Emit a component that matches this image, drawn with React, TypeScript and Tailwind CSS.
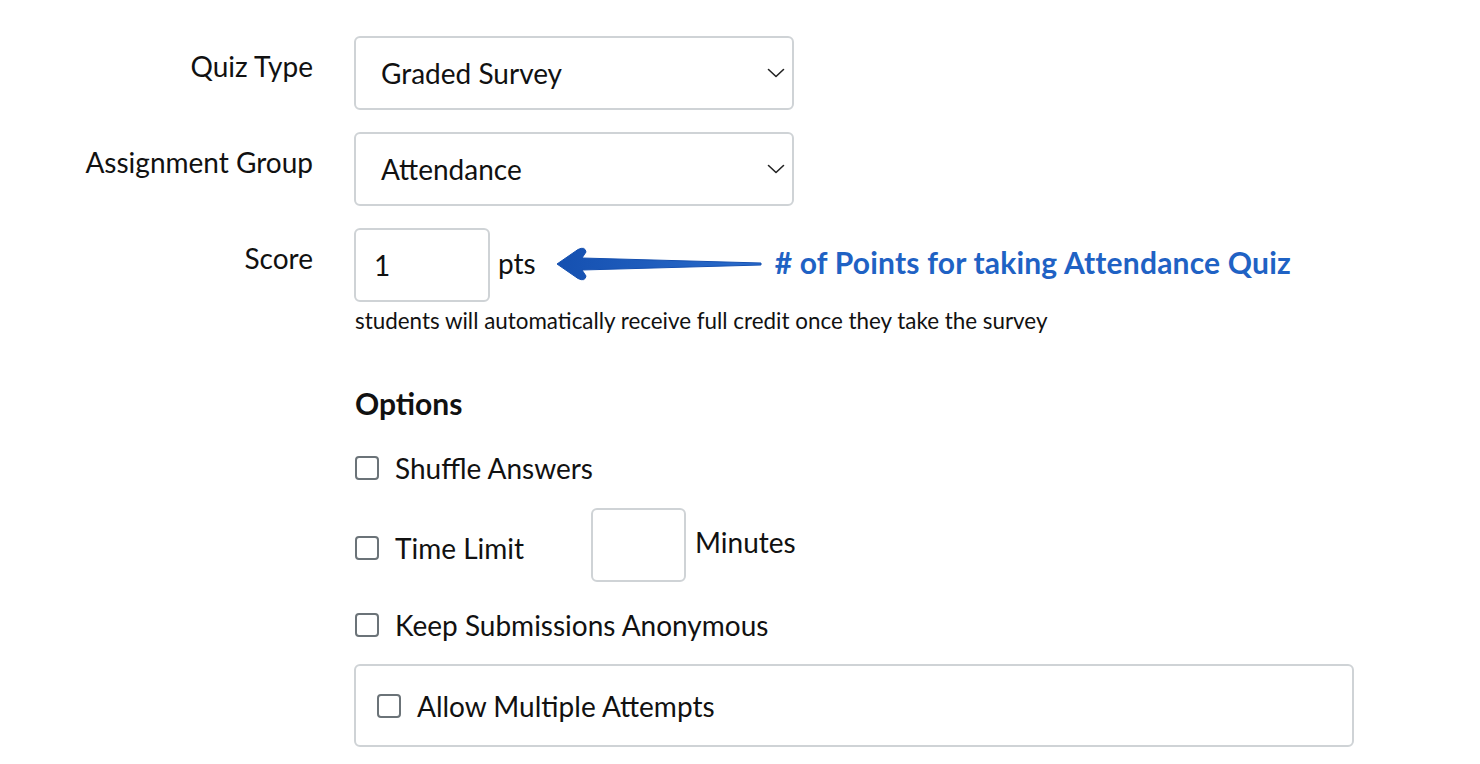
import { useState } from "react"

const FONT = { fontFamily: "Lato, 'Noto Sans', sans-serif" }

function Chevron() {
  return (
    <svg width="18" height="10" viewBox="0 0 18 10" className="shrink-0">
      <path d="M1.5 1.5 L9 8.5 L16.5 1.5" fill="none" stroke="#222" strokeWidth="1.6" strokeLinecap="round" strokeLinejoin="round" />
    </svg>
  )
}

function Select({ value }: { value: string }) {
  return (
    <div className="flex h-[74px] w-[440px] items-center justify-between rounded-[6px] border-2 border-[#cfd3d6] bg-white pl-[25px] pr-[7px]">
      <span className="text-[28px] text-[#111]">{value}</span>
      <Chevron />
    </div>
  )
}

function Checkbox({ checked, onChange }: { checked: boolean; onChange: () => void }) {
  return (
    <button
      onClick={onChange}
      className="flex h-[24px] w-[24px] shrink-0 items-center justify-center rounded-[4px] border-2 border-[#6b7378] bg-white"
    >
      {checked && (
        <svg width="14" height="14" viewBox="0 0 14 14">
          <path d="M2 7 L6 11 L12 3" fill="none" stroke="#222" strokeWidth="2" />
        </svg>
      )}
    </button>
  )
}

function Arrow() {
  return (
    <svg width="212" height="40" viewBox="0 0 212 40" className="shrink-0">
      <defs>
        <linearGradient id="arrowFill" x1="0" y1="0" x2="1" y2="0">
          <stop offset="0" stopColor="#1550b0" />
          <stop offset="1" stopColor="#2a6ccc" />
        </linearGradient>
      </defs>
      <path
        d="M2 20 L23 5.5 Q30 2 31 8 L27 14 L206 19 L206 21 L27 26 L31 32 Q30 38 23 34.5 Z"
        fill="url(#arrowFill)"
        stroke="#1550b0"
        strokeWidth="1"
        strokeLinejoin="round"
      />
    </svg>
  )
}

export default function App() {
  const [opts, setOpts] = useState({ shuffle: false, time: false, anon: false, multi: false })
  const toggle = (k: keyof typeof opts) => setOpts((o) => ({ ...o, [k]: !o[k] }))

  return (
    <div className="min-h-[764px] bg-white text-[#111]" style={FONT}>
      <div className="grid grid-cols-[313px_1fr] gap-x-[41px] pt-[36px]">
        <div className="pt-[10px] text-right text-[28px] leading-[40px]">Quiz Type</div>
        <Select value="Graded Survey" />

        <div className="mt-[22px] pt-[10px] text-right text-[28px] leading-[40px]">Assignment Group</div>
        <div className="mt-[22px]">
          <Select value="Attendance" />
        </div>

        <div className="mt-[22px] pt-[10px] text-right text-[28px] leading-[40px]">Score</div>
        <div className="mt-[22px]">
          <div className="flex h-[74px] items-center">
            <div className="flex h-[74px] w-[136px] items-center rounded-[6px] border-2 border-[#cfd3d6] pl-[18px] text-[28px]">
              1
            </div>
            <span className="ml-[8px] mb-[4px] text-[28px]">pts</span>
            <div className="ml-[19px] mb-[2px]">
              <Arrow />
            </div>
            <span className="ml-[8px] mb-[6px] text-[30px] font-bold tracking-[0.2px] text-[#1f62c4]">
              # of Points for taking Attendance Quiz
            </span>
          </div>
          <p className="mt-[4px] h-[30px] pl-[1px] text-[22.4px] leading-[30px]">
            students will automatically receive full credit once they take the survey
          </p>

          <h2 className="mt-[47px] h-[40px] pl-[1px] text-[30px] font-bold leading-[40px]">Options</h2>

          <div className="mt-[29px] flex h-[32px] items-center gap-[16px] pl-[1px]">
            <Checkbox checked={opts.shuffle} onChange={() => toggle("shuffle")} />
            <span className="text-[28px] leading-[32px]">Shuffle Answers</span>
          </div>

          <div className="mt-[24px] flex h-[74px] items-start pl-[1px]">
            <div className="mt-[24px] flex h-[32px] items-center gap-[16px]">
              <Checkbox checked={opts.time} onChange={() => toggle("time")} />
              <span className="text-[28px] leading-[32px]">Time Limit</span>
            </div>
            <div className="ml-[67px] h-[74px] w-[95px] rounded-[6px] border-2 border-[#cfd3d6]" />
            <span className="ml-[9px] mt-[17px] text-[28px] leading-[34px]">Minutes</span>
          </div>

          <div className="mt-[27px] flex h-[32px] items-center gap-[16px] pl-[1px]">
            <Checkbox checked={opts.anon} onChange={() => toggle("anon")} />
            <span className="text-[28px] leading-[32px]">Keep Submissions Anonymous</span>
          </div>

          <div className="mt-[23px] flex h-[83px] w-[1000px] items-center gap-[16px] rounded-[6px] border-2 border-[#cfd3d6] pl-[21px]">
            <Checkbox checked={opts.multi} onChange={() => toggle("multi")} />
            <span className="text-[28px] leading-[32px]">Allow Multiple Attempts</span>
          </div>
        </div>
      </div>
    </div>
  )
}
